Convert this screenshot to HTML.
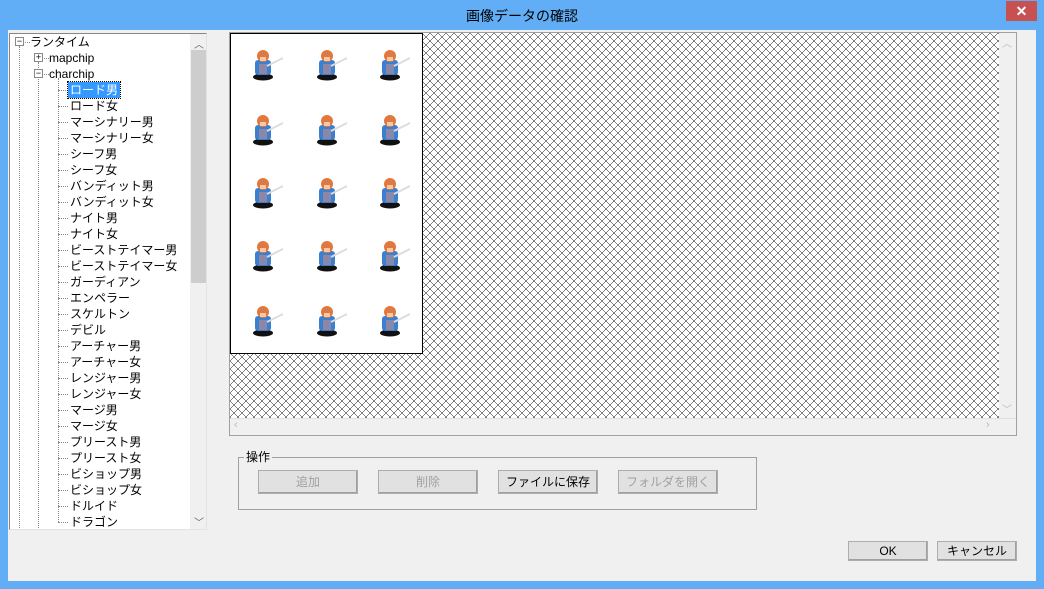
<!DOCTYPE html>
<html><head><meta charset="utf-8"><style>
*{margin:0;padding:0;box-sizing:border-box}
body{width:1044px;height:589px;background:#61aef6;position:relative;overflow:hidden;font-family:"Liberation Sans","Noto Sans CJK JP",sans-serif;font-size:12px;color:#000}
.abs{position:absolute}
#title{left:0;top:0;width:1044px;height:30px;text-align:center;line-height:32px;font-size:14px;color:#000}
#close{left:1006px;top:1px;width:31px;height:20px;background:#c75050;color:#fff;text-align:center;line-height:20px;font-size:14px;font-weight:bold}
#client{left:8px;top:30px;width:1028px;height:551px;background:#f0f0f0}
#tree{left:9px;top:33px;width:198px;height:497px;background:#fff;border:1px solid #828790;border-right:1px solid #e3e3e3;border-bottom:1px solid #e3e3e3;overflow:hidden}
.it{position:absolute;left:60px;height:16px;line-height:16px;white-space:nowrap}
.vd{position:absolute;width:1px;border-left:1px dotted #888}
.hd{position:absolute;height:1px;border-top:1px dotted #888}
.box{position:absolute;width:9px;height:9px;border:1px solid #888;background:#fff;font-size:9px;line-height:7px;text-align:center}
#vs{position:absolute;left:180px;top:0;width:17px;height:496px;background:#f0f0f0}
#thumb{position:absolute;left:181px;top:16px;width:15px;height:233px;background:#cdcdcd}
#img{left:229px;top:32px;width:788px;height:404px;border:1px solid #a0a0a0;background:#f0f0f0}
#chk{position:absolute;left:0;top:0;width:769px;height:385px}
#pic{position:absolute;left:0;top:0;width:193px;height:321px;background:#fff;border:1px solid #000}
.grp{left:238px;top:457px;width:519px;height:53px;border:1px solid #a0a0a0}
.btn{position:absolute;height:24px;border:1px solid #adadad;background:#e1e1e1;text-align:center;line-height:22px;box-shadow:inset -1px -1px 0 #a0a0a0}
.dis{color:#a0a0a0}
</style></head><body>
<div class="abs" id="title">画像データの確認</div>
<div class="abs" id="close">✕</div>
<div class="abs" id="client"></div>

<div class="abs" id="tree">
<div class="vd" style="left:9px;top:12px;height:490px"></div>
<div class="vd" style="left:28px;top:28px;height:470px"></div>
<div class="vd" style="left:48px;top:44px;height:444px"></div>
<div class="box" style="left:5px;top:3px">−</div><div class="hd" style="left:15px;top:8px;width:5px"></div>
<div class="it" style="left:20px;top:0">ランタイム</div>
<div class="box" style="left:24px;top:19px">+</div><div class="hd" style="left:34px;top:24px;width:5px"></div>
<div class="it" style="left:39px;top:16px">mapchip</div>
<div class="box" style="left:24px;top:35px">−</div><div class="hd" style="left:34px;top:40px;width:5px"></div>
<div class="it" style="left:39px;top:32px">charchip</div>
<div style="position:absolute;left:48px;top:56px">
<div class="hd" style="left:0;top:0;width:10px"></div><div class="hd" style="left:0;top:16px;width:10px"></div><div class="hd" style="left:0;top:32px;width:10px"></div><div class="hd" style="left:0;top:48px;width:10px"></div><div class="hd" style="left:0;top:64px;width:10px"></div><div class="hd" style="left:0;top:80px;width:10px"></div><div class="hd" style="left:0;top:96px;width:10px"></div><div class="hd" style="left:0;top:112px;width:10px"></div><div class="hd" style="left:0;top:128px;width:10px"></div><div class="hd" style="left:0;top:144px;width:10px"></div><div class="hd" style="left:0;top:160px;width:10px"></div><div class="hd" style="left:0;top:176px;width:10px"></div><div class="hd" style="left:0;top:192px;width:10px"></div><div class="hd" style="left:0;top:208px;width:10px"></div><div class="hd" style="left:0;top:224px;width:10px"></div><div class="hd" style="left:0;top:240px;width:10px"></div><div class="hd" style="left:0;top:256px;width:10px"></div><div class="hd" style="left:0;top:272px;width:10px"></div><div class="hd" style="left:0;top:288px;width:10px"></div><div class="hd" style="left:0;top:304px;width:10px"></div><div class="hd" style="left:0;top:320px;width:10px"></div><div class="hd" style="left:0;top:336px;width:10px"></div><div class="hd" style="left:0;top:352px;width:10px"></div><div class="hd" style="left:0;top:368px;width:10px"></div><div class="hd" style="left:0;top:384px;width:10px"></div><div class="hd" style="left:0;top:400px;width:10px"></div><div class="hd" style="left:0;top:416px;width:10px"></div><div class="hd" style="left:0;top:432px;width:10px"></div>
</div>
<div class="it" style="top:48px;left:58px;background:#3399ff;color:#fff;padding:0 2px;outline:1px dotted #000">ロード男</div>
<div class="it" style="top:64px">ロード女</div>
<div class="it" style="top:80px">マーシナリー男</div>
<div class="it" style="top:96px">マーシナリー女</div>
<div class="it" style="top:112px">シーフ男</div>
<div class="it" style="top:128px">シーフ女</div>
<div class="it" style="top:144px">バンディット男</div>
<div class="it" style="top:160px">バンディット女</div>
<div class="it" style="top:176px">ナイト男</div>
<div class="it" style="top:192px">ナイト女</div>
<div class="it" style="top:208px">ビーストテイマー男</div>
<div class="it" style="top:224px">ビーストテイマー女</div>
<div class="it" style="top:240px">ガーディアン</div>
<div class="it" style="top:256px">エンペラー</div>
<div class="it" style="top:272px">スケルトン</div>
<div class="it" style="top:288px">デビル</div>
<div class="it" style="top:304px">アーチャー男</div>
<div class="it" style="top:320px">アーチャー女</div>
<div class="it" style="top:336px">レンジャー男</div>
<div class="it" style="top:352px">レンジャー女</div>
<div class="it" style="top:368px">マージ男</div>
<div class="it" style="top:384px">マージ女</div>
<div class="it" style="top:400px">プリースト男</div>
<div class="it" style="top:416px">プリースト女</div>
<div class="it" style="top:432px">ビショップ男</div>
<div class="it" style="top:448px">ビショップ女</div>
<div class="it" style="top:464px">ドルイド</div>
<div class="it" style="top:480px">ドラゴン</div>
<div id="vs"></div><div id="thumb"></div>
<div class="abs" style="left:184px;top:2px;color:#606060;font-size:10px">︿</div>
<div class="abs" style="left:184px;top:480px;color:#606060;font-size:10px">﹀</div>
</div>

<div class="abs" id="img">
<svg id="chk" width="769" height="385" shape-rendering="crispEdges">
<defs><pattern id="p" width="8" height="8" patternUnits="userSpaceOnUse">
<rect width="8" height="8" fill="#fff"/>
<rect x="0" y="0" width="1" height="1" fill="#808080"/><rect x="1" y="1" width="1" height="1" fill="#808080"/><rect x="2" y="2" width="1" height="1" fill="#808080"/><rect x="3" y="3" width="1" height="1" fill="#808080"/><rect x="4" y="4" width="1" height="1" fill="#808080"/><rect x="5" y="5" width="1" height="1" fill="#808080"/><rect x="6" y="6" width="1" height="1" fill="#808080"/><rect x="7" y="7" width="1" height="1" fill="#808080"/>
<rect x="7" y="0" width="1" height="1" fill="#808080"/><rect x="6" y="1" width="1" height="1" fill="#808080"/><rect x="5" y="2" width="1" height="1" fill="#808080"/><rect x="4" y="3" width="1" height="1" fill="#808080"/><rect x="3" y="4" width="1" height="1" fill="#808080"/><rect x="2" y="5" width="1" height="1" fill="#808080"/><rect x="1" y="6" width="1" height="1" fill="#808080"/><rect x="0" y="7" width="1" height="1" fill="#808080"/>
</pattern>
<g id="s"><ellipse cx="0" cy="13" rx="10" ry="3.5" fill="#111"/><rect x="-8" y="-4" width="16" height="15" rx="3" fill="#3a7fd0"/><rect x="-4" y="0" width="8" height="10" fill="#8a88a8"/><circle cx="0" cy="-8" r="6" fill="#e07840"/><rect x="-3" y="-7" width="6" height="4" fill="#f8c8a0"/><line x1="4" y1="2" x2="20" y2="-6" stroke="#ddd" stroke-width="2"/></g>
</defs>
<rect width="769" height="385" fill="url(#p)"/>
</svg>
<div id="pic"><svg width="191" height="319">
<use href="#s" x="32" y="30"/><use href="#s" x="96" y="30"/><use href="#s" x="159" y="30"/>
<use href="#s" x="32" y="95"/><use href="#s" x="96" y="95"/><use href="#s" x="159" y="95"/>
<use href="#s" x="32" y="158"/><use href="#s" x="96" y="158"/><use href="#s" x="159" y="158"/>
<use href="#s" x="32" y="221"/><use href="#s" x="96" y="221"/><use href="#s" x="159" y="221"/>
<use href="#s" x="32" y="286"/><use href="#s" x="96" y="286"/><use href="#s" x="159" y="286"/>
</svg></div>
<div style="position:absolute;left:769px;top:0;width:17px;height:385px;background:#f0f0f0"></div>
<div style="position:absolute;left:0;top:385px;width:786px;height:17px;background:#f0f0f0;border-top:1px solid #e0e0e0"></div>
<div style="position:absolute;left:772px;top:2px;color:#bbb;font-size:10px">︿</div>
<div style="position:absolute;left:772px;top:368px;color:#bbb;font-size:10px">﹀</div>
<div style="position:absolute;left:4px;top:386px;color:#bbb;font-size:11px">‹</div>
<div style="position:absolute;left:756px;top:386px;color:#bbb;font-size:11px">›</div>
</div>

<div class="abs grp"></div>
<div class="abs" style="left:244px;top:450px;background:#f0f0f0;padding:0 2px;line-height:14px">操作</div>
<div class="btn dis" style="left:258px;top:470px;width:100px">追加</div>
<div class="btn dis" style="left:378px;top:470px;width:100px">削除</div>
<div class="btn" style="left:498px;top:470px;width:100px">ファイルに保存</div>
<div class="btn dis" style="left:618px;top:470px;width:100px">フォルダを開く</div>
<div class="btn" style="left:848px;top:541px;width:80px;height:20px;line-height:18px">OK</div>
<div class="btn" style="left:937px;top:541px;width:80px;height:20px;line-height:18px">キャンセル</div>
</body></html>
